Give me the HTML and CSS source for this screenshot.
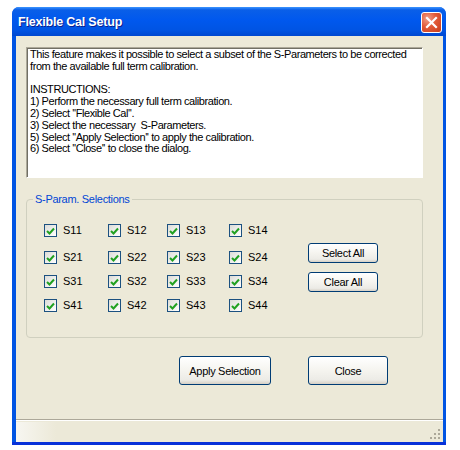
FILE: index.html
```html
<!DOCTYPE html>
<html lang="en">
<head>
  <meta charset="UTF-8" />
  <title>Flexible Cal Setup</title>
  <link rel="stylesheet" href="styles.css">
</head>
<body>
  <div class="window">
    <div class="titlebar">
      <span class="title">Flexible Cal Setup</span>
      <span class="close-btn">
        <svg width="13" height="13" viewBox="0 0 13 13"><path d="M2 2 L11 11 M11 2 L2 11" stroke="#fff" stroke-width="2.2" stroke-linecap="square"/></svg>
      </span>
    </div>
    <div class="client">
      <div class="info">This feature makes it possible to select a subset of the S-Parameters to be corrected
from the available full term calibration.

INSTRUCTIONS:
1) Perform the necessary full term calibration.
2) Select ''Flexible Cal''.
3) Select the necessary  S-Parameters.
5) Select ''Apply Selection'' to apply the calibration.
6) Select ''Close'' to close the dialog.</div>

      <div class="group">
        <span class="group-title">S-Param. Selections</span>
        <div class="grid">
          <label class="chk"><span class="box"><svg width="9" height="8" viewBox="0 0 9 8"><path d="M1 4 L3.5 6.5 L8 1.5" fill="none" stroke="#21a121" stroke-width="2"/></svg></span>S11</label>
          <label class="chk"><span class="box"><svg width="9" height="8" viewBox="0 0 9 8"><path d="M1 4 L3.5 6.5 L8 1.5" fill="none" stroke="#21a121" stroke-width="2"/></svg></span>S12</label>
          <label class="chk"><span class="box"><svg width="9" height="8" viewBox="0 0 9 8"><path d="M1 4 L3.5 6.5 L8 1.5" fill="none" stroke="#21a121" stroke-width="2"/></svg></span>S13</label>
          <label class="chk"><span class="box"><svg width="9" height="8" viewBox="0 0 9 8"><path d="M1 4 L3.5 6.5 L8 1.5" fill="none" stroke="#21a121" stroke-width="2"/></svg></span>S14</label>
          <div class="side-btns">
            <button class="btn small">Select All</button>
            <button class="btn small">Clear All</button>
          </div>
          <label class="chk"><span class="box"><svg width="9" height="8" viewBox="0 0 9 8"><path d="M1 4 L3.5 6.5 L8 1.5" fill="none" stroke="#21a121" stroke-width="2"/></svg></span>S21</label>
          <label class="chk"><span class="box"><svg width="9" height="8" viewBox="0 0 9 8"><path d="M1 4 L3.5 6.5 L8 1.5" fill="none" stroke="#21a121" stroke-width="2"/></svg></span>S22</label>
          <label class="chk"><span class="box"><svg width="9" height="8" viewBox="0 0 9 8"><path d="M1 4 L3.5 6.5 L8 1.5" fill="none" stroke="#21a121" stroke-width="2"/></svg></span>S23</label>
          <label class="chk"><span class="box"><svg width="9" height="8" viewBox="0 0 9 8"><path d="M1 4 L3.5 6.5 L8 1.5" fill="none" stroke="#21a121" stroke-width="2"/></svg></span>S24</label>
          <label class="chk"><span class="box"><svg width="9" height="8" viewBox="0 0 9 8"><path d="M1 4 L3.5 6.5 L8 1.5" fill="none" stroke="#21a121" stroke-width="2"/></svg></span>S31</label>
          <label class="chk"><span class="box"><svg width="9" height="8" viewBox="0 0 9 8"><path d="M1 4 L3.5 6.5 L8 1.5" fill="none" stroke="#21a121" stroke-width="2"/></svg></span>S32</label>
          <label class="chk"><span class="box"><svg width="9" height="8" viewBox="0 0 9 8"><path d="M1 4 L3.5 6.5 L8 1.5" fill="none" stroke="#21a121" stroke-width="2"/></svg></span>S33</label>
          <label class="chk"><span class="box"><svg width="9" height="8" viewBox="0 0 9 8"><path d="M1 4 L3.5 6.5 L8 1.5" fill="none" stroke="#21a121" stroke-width="2"/></svg></span>S34</label>
          <label class="chk"><span class="box"><svg width="9" height="8" viewBox="0 0 9 8"><path d="M1 4 L3.5 6.5 L8 1.5" fill="none" stroke="#21a121" stroke-width="2"/></svg></span>S41</label>
          <label class="chk"><span class="box"><svg width="9" height="8" viewBox="0 0 9 8"><path d="M1 4 L3.5 6.5 L8 1.5" fill="none" stroke="#21a121" stroke-width="2"/></svg></span>S42</label>
          <label class="chk"><span class="box"><svg width="9" height="8" viewBox="0 0 9 8"><path d="M1 4 L3.5 6.5 L8 1.5" fill="none" stroke="#21a121" stroke-width="2"/></svg></span>S43</label>
          <label class="chk"><span class="box"><svg width="9" height="8" viewBox="0 0 9 8"><path d="M1 4 L3.5 6.5 L8 1.5" fill="none" stroke="#21a121" stroke-width="2"/></svg></span>S44</label>
        </div>
      </div>

      <div class="actions">
        <button class="btn big apply">Apply Selection</button>
        <button class="btn big close">Close</button>
      </div>

      <div class="statusbar">
        <span class="pane"></span>
        <svg class="grip" width="12" height="12" viewBox="0 0 12 12">
          <rect x="9" y="1" width="2" height="2" fill="#aca899"/>
          <rect x="5" y="5" width="2" height="2" fill="#aca899"/>
          <rect x="9" y="5" width="2" height="2" fill="#aca899"/>
          <rect x="1" y="9" width="2" height="2" fill="#aca899"/>
          <rect x="5" y="9" width="2" height="2" fill="#aca899"/>
          <rect x="9" y="9" width="2" height="2" fill="#aca899"/>
        </svg>
      </div>
    </div>
  </div>
</body>
</html>
```

FILE: styles.css
```css
body {
  margin: 0;
  padding: 7px 0 0 12px;
  background: #fff;
  font-family: "Liberation Sans", Arial, sans-serif;
  font-size: 11px;
  color: #000;
}
.window {
  width: 434px;
  height: 438px;
  box-sizing: border-box;
  background: #0054e3;
  border-radius: 7px 7px 0 0;
  display: flex;
  flex-direction: column;
  overflow: hidden;
  border-bottom: 3px solid #0831d9;
}
.titlebar {
  height: 29px;
  flex: none;
  display: flex;
  align-items: center;
  justify-content: space-between;
  padding: 0 4px 0 6px;
  background: linear-gradient(#3d95ff 0%, #0a5fe8 10%, #0058ee 45%, #0054e3 80%, #0048d0 100%);
}
.title {
  color: #fff;
  font-weight: bold;
  font-size: 12.5px;
  letter-spacing: -0.2px;
  text-shadow: 1px 1px 0 #0a1f8f;
}
.close-btn {
  width: 19px;
  height: 19px;
  margin-top: 2px;
  border: 1px solid #fff;
  border-radius: 3px;
  background: radial-gradient(circle at 30% 30%, #f0a08c 0%, #e25a37 45%, #c73d1c 100%);
  display: flex;
  align-items: center;
  justify-content: center;
}
.client {
  flex: 1;
  margin: 0 3px 0 4px;
  background: #ece9d8;
  display: flex;
  flex-direction: column;
  padding: 11px 0 0 10px;
}
.info {
  width: 397px;
  height: 131px;
  box-sizing: border-box;
  background: #fff;
  border: 1px solid #fff;
  border-top-color: #aca899;
  border-left-color: #aca899;
  box-shadow: inset 1px 1px 0 #716f64;
  padding: 1px 2px 0 3px;
  line-height: 11.8px;
  white-space: pre;
  overflow: hidden;
  letter-spacing: -0.42px;
}
.group {
  position: relative;
  width: 397px;
  box-sizing: border-box;
  margin-top: 21px;
  border: 1px solid #d0d0bf;
  border-radius: 4px;
  padding: 24px 0 14px 17px;
}
.group-title {
  position: absolute;
  top: -7px;
  left: 6px;
  padding: 0 2px;
  background: #ece9d8;
  color: #0046d5;
  letter-spacing: -0.3px;
}
.grid {
  display: grid;
  grid-template-columns: 64px 59px 62px 79px 70px;
  grid-template-rows: 27px 24px 24px 24px;
}
.chk {
  display: flex;
  align-items: flex-start;
  line-height: 13px;
}
.box {
  width: 11px;
  height: 11px;
  border: 1px solid #1c5180;
  background: linear-gradient(135deg, #dcdcd7, #fff);
  display: flex;
  align-items: center;
  justify-content: center;
  margin-right: 6px;
}
.side-btns {
  grid-column: 5;
  grid-row: 1 / span 4;
  display: flex;
  flex-direction: column;
  gap: 9px;
  padding-top: 19px;
}
.btn {
  font-family: "Liberation Sans", Arial, sans-serif;
  font-size: 11px;
  color: #000;
  border: 1px solid #003c74;
  border-radius: 3px;
  background: linear-gradient(#ffffff 0%, #f5f4ef 50%, #ecebe6 85%, #d6d0c5 100%);
  padding: 0;
  letter-spacing: -0.3px;
}
.btn.small {
  width: 70px;
  height: 20px;
}
.actions {
  display: flex;
  margin-top: 18px;
  padding-left: 153px;
  gap: 37px;
}
.btn.big {
  height: 29px;
}
.btn.apply {
  width: 92px;
}
.btn.close {
  width: 80px;
}
.statusbar {
  margin: auto 0 0 -10px;
  height: 22px;
  border-top: 1px solid #aca899;
  box-shadow: inset 0 1px 0 #fff;
  display: flex;
  justify-content: space-between;
  align-items: flex-end;
  background: #ece9d8;
}
.pane {
  width: 40px;
  height: 20px;
  background: linear-gradient(90deg, #f7f6f1, #ece9d8);
}
.grip {
  margin: 0 2px 2px 0;
}
```
